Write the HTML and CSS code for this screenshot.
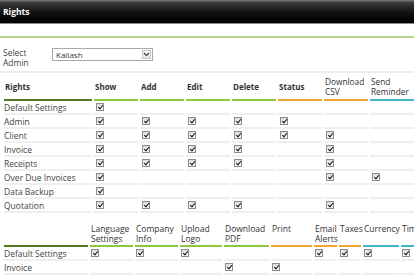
FILE: index.html
```html
<!DOCTYPE html>
<html lang="en">
<head>
  <meta charset="UTF-8">
  <title>Rights</title>
  <link rel="stylesheet" href="styles.css">
</head>
<body>

<div class="titlebar">Rights</div>

<div class="filter">
  <div class="filter-label">Select Admin</div>
  <div class="select">
    <span class="select-value">Kailash</span>
    <span class="select-arrow">
      <svg width="7" height="5" viewBox="0 0 7 5"><path d="M1 1 L3.5 3.5 L6 1" fill="none" stroke="#444" stroke-width="1.2"/></svg>
    </span>
  </div>
</div>

<div class="matrix rights">
  <div class="hd line-dark">Rights</div>
  <div class="hd line-green">Show</div>
  <div class="hd line-green">Add</div>
  <div class="hd line-green">Edit</div>
  <div class="hd line-green">Delete</div>
  <div class="hd line-orange">Status</div>
  <div class="hd line-orange light">Download CSV</div>
  <div class="hd line-teal light">Send Reminder</div>

  <div class="cell name">Default Settings</div>
  <div class="cell"><span class="chk"></span></div><div class="cell"></div><div class="cell"></div><div class="cell"></div>
  <div class="cell"></div><div class="cell"></div><div class="cell"></div>

  <div class="cell name">Admin</div>
  <div class="cell"><span class="chk"></span></div><div class="cell"><span class="chk"></span></div><div class="cell"><span class="chk"></span></div><div class="cell"><span class="chk"></span></div>
  <div class="cell"><span class="chk"></span></div><div class="cell"></div><div class="cell"></div>

  <div class="cell name">Client</div>
  <div class="cell"><span class="chk"></span></div><div class="cell"><span class="chk"></span></div><div class="cell"><span class="chk"></span></div><div class="cell"><span class="chk"></span></div>
  <div class="cell"><span class="chk"></span></div><div class="cell"><span class="chk"></span></div><div class="cell"></div>

  <div class="cell name">Invoice</div>
  <div class="cell"><span class="chk"></span></div><div class="cell"><span class="chk"></span></div><div class="cell"><span class="chk"></span></div><div class="cell"><span class="chk"></span></div>
  <div class="cell"></div><div class="cell"><span class="chk"></span></div><div class="cell"></div>

  <div class="cell name">Receipts</div>
  <div class="cell"><span class="chk"></span></div><div class="cell"><span class="chk"></span></div><div class="cell"><span class="chk"></span></div><div class="cell"><span class="chk"></span></div>
  <div class="cell"></div><div class="cell"><span class="chk"></span></div><div class="cell"></div>

  <div class="cell name">Over Due Invoices</div>
  <div class="cell"><span class="chk"></span></div><div class="cell"></div><div class="cell"></div><div class="cell"></div>
  <div class="cell"></div><div class="cell"><span class="chk"></span></div><div class="cell"><span class="chk"></span></div>

  <div class="cell name">Data Backup</div>
  <div class="cell"><span class="chk"></span></div><div class="cell"></div><div class="cell"></div><div class="cell"></div>
  <div class="cell"></div><div class="cell"></div><div class="cell"></div>

  <div class="cell name">Quotation</div>
  <div class="cell"><span class="chk"></span></div><div class="cell"><span class="chk"></span></div><div class="cell"><span class="chk"></span></div><div class="cell"><span class="chk"></span></div>
  <div class="cell"></div><div class="cell"><span class="chk"></span></div><div class="cell"></div>
</div>

<div class="matrix settings">
  <div class="hd line-dark"></div>
  <div class="hd line-green">Language Settings</div>
  <div class="hd line-green">Company Info</div>
  <div class="hd line-green">Upload Logo</div>
  <div class="hd line-green">Download PDF</div>
  <div class="hd line-orange">Print</div>
  <div class="hd line-orange">Email Alerts</div>
  <div class="hd line-orange">Taxes</div>
  <div class="hd line-teal">Currency</div>
  <div class="hd line-teal">Time Zone</div>

  <div class="cell name">Default Settings</div>
  <div class="cell"><span class="chk"></span></div><div class="cell"><span class="chk"></span></div><div class="cell"><span class="chk"></span></div>
  <div class="cell"></div><div class="cell"></div>
  <div class="cell"><span class="chk"></span></div><div class="cell"><span class="chk"></span></div><div class="cell"><span class="chk"></span></div><div class="cell"><span class="chk"></span></div>

  <div class="cell name">Invoice</div>
  <div class="cell"></div><div class="cell"></div><div class="cell"></div>
  <div class="cell"><span class="chk"></span></div><div class="cell"><span class="chk"></span></div>
  <div class="cell"></div><div class="cell"></div><div class="cell"></div><div class="cell"></div>
</div>

</body>
</html>
```

FILE: styles.css
```css
html, body {
  overflow: hidden;
}

body {
  margin: 0;
  font-family: "Open Sans", "Noto Sans", sans-serif;
  font-size: 8.5px;
  color: #444;
  background: #fff;
}

.titlebar {
  height: 23px;
  line-height: 23px;
  padding-left: 3px;
  color: #fff;
  font-weight: bold;
  font-size: 8.5px;
  background: linear-gradient(#7a7a7a 0, #3a3a3a 12%, #111 55%, #000 100%);
  border-bottom: 1px solid #8a8a8a;
}

.filter {
  display: flex;
  align-items: flex-start;
  margin-top: 12px;
  padding: 10px 0 3px 3px;
  border-top: 2px solid #b7d58e;
  border-bottom: 2px solid #ececec;
}

.filter-label {
  width: 30px;
  margin-right: 19px;
  line-height: 10px;
}

.select {
  display: flex;
  align-items: center;
  width: 101px;
  height: 13px;
  box-sizing: border-box;
  border: 1px solid #a9a9a9;
  padding: 0 1px 0 3px;
  background: #fff;
  color: #333;
}

.select-value {
  flex: 1;
  font-size: 8px;
  line-height: 11px;
}

.select-arrow {
  display: flex;
  align-items: center;
  justify-content: center;
  width: 9px;
  height: 9px;
  box-sizing: border-box;
  border: 1px solid #c4c4c4;
  background: linear-gradient(#fafafa, #e6e6e6);
}

/* permission grids */
.matrix {
  display: grid;
  column-gap: 2px;
  width: max-content;
  padding-left: 4px;
}

.rights {
  grid-template-columns: 88px repeat(7, 44px);
}

.settings {
  grid-template-columns: 84px 43px 43px 42px 45px 41px 23px 22px 36px 50px;
  margin-top: 11px;
}

.hd {
  box-sizing: border-box;
  padding-left: 1px;
  line-height: 10px;
  color: #333;
}

.rights .hd {
  display: flex;
  align-items: center;
  height: 28px;
  padding-top: 2px;
  font-size: 8px;
  font-weight: bold;
}

.rights .hd.light {
  font-weight: normal;
  font-size: 8.3px;
}

.settings .hd {
  height: 23px;
  padding-top: 0;
}

.line-dark { border-bottom: 2px solid #557a25; }
.line-green { border-bottom: 2px solid #8dc63f; }
.line-orange { border-bottom: 2px solid #f2a531; }
.line-teal { border-bottom: 2px solid #3fb7c8; }

.cell {
  display: flex;
  align-items: center;
  box-sizing: border-box;
  height: 14px;
  padding-left: 2px;
  border-bottom: 2px solid #efefef;
  white-space: nowrap;
}

.cell.name {
  padding-left: 0;
}

.settings .cell {
  padding-left: 1px;
}

.settings .cell.name {
  padding-left: 0;
}

.chk {
  display: inline-block;
  position: relative;
  width: 8px;
  height: 8px;
  box-sizing: border-box;
  border: 1px solid #8c8c8c;
  background: linear-gradient(#dcdcdc, #fff);
}

.chk::after {
  content: "";
  position: absolute;
  left: 2px;
  top: 0;
  width: 2px;
  height: 4px;
  border: solid #111;
  border-width: 0 1.5px 1.5px 0;
  transform: rotate(40deg);
}
```
